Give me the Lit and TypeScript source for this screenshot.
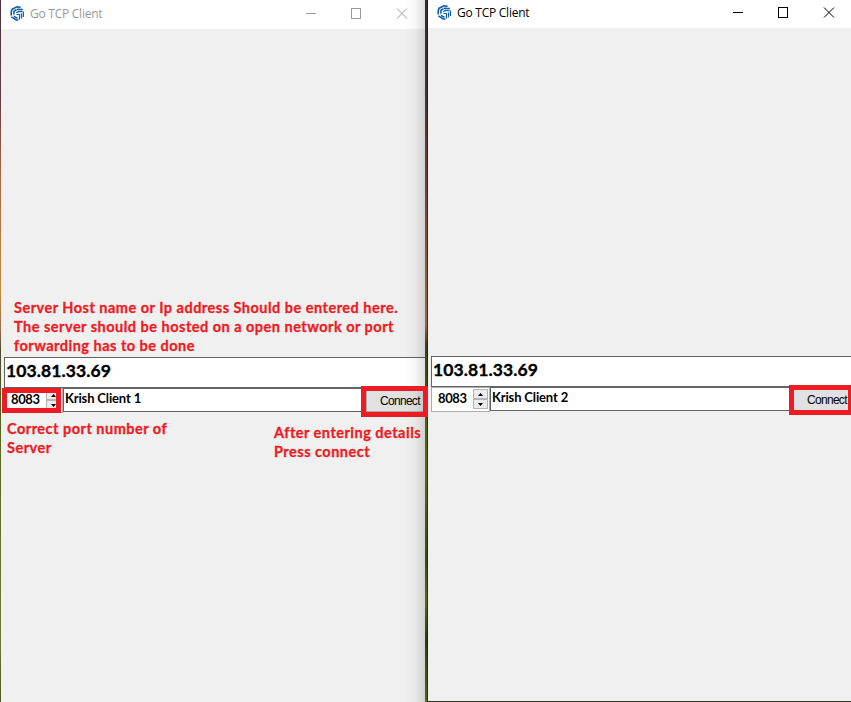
import { LitElement, html, css, svg } from "lit";
import { customElement, property } from "lit/decorators.js";

const logo = svg`
  <g fill="none" stroke="#0f60a8" stroke-width="1.6">
    <path d="M10.6 1.2 L7 0.9 L2.2 3.2 L1.2 5.6 V9.4" />
    <path d="M12.8 3.6 L7.6 3.2 L4 5.2 L3.8 9.2" stroke-dasharray="6 .5" />
    <path d="M12.6 5.8 L8.6 5.4 L6.2 6.8" stroke-width="1.1" />
    <path d="M1.4 10.8 L6.2 14 H8.4 M4 10.4 L7.6 12.4" />
    <path d="M6.5 8.5 H9.5 V13.4 M11.5 7.5 V12.6 M13.4 5.6 V11" stroke-width="1.2" />
  </g>`;

@customElement("client-window")
export class ClientWindow extends LitElement {
  @property() host = "";
  @property() port = "";
  @property() name = "";

  static styles = css`
    :host {
      display: flex;
      flex-direction: column;
      background: #f0f0f0;
      overflow: hidden;
      color: #000;
      --bar: 28px;
      --ink: #000;
      --end: 16px;
      --lift: -4px;
    }
    .bar {
      flex: none;
      display: flex;
      align-items: center;
      height: var(--bar);
      background: #fff;
      color: var(--ink);
      padding-left: 9px;
    }
    .logo { width: 14px; height: 15px; flex: none; margin-top: -3px; }
    .title {
      flex: 1;
      margin-left: 6px;
      margin-top: -2px;
      font: 12px/16px "Open Sans", "Noto Sans", sans-serif;
      letter-spacing: -0.25px;
      white-space: pre;
    }
    .controls { flex: none; width: 103px; height: 11px; margin: var(--lift) var(--end) 0 0; display: block; }
    .form {
      margin: 328px 0 0 3px;
      display: grid;
      grid-template-columns: 59px 303px 1fr;
      grid-template-rows: 31px 25px;
      font-family: Lato, sans-serif;
      font-weight: 700;
    }
    .host {
      grid-column: 1 / -1;
      border: 1px solid #646464;
      border-right: 0;
      background: #fff;
      padding-left: 1px;
      font-size: 17.5px;
      line-height: 26px;
      letter-spacing: 0.1px;
      -webkit-text-stroke: 0.35px;
    }
    .port {
      box-sizing: border-box;
      height: 25px;
      border: 1px solid #abadb3;
      background: #fff;
      display: flex;
      padding: 1px 1px 2px 6px;
      font-size: 13px;
      line-height: 18px;
      letter-spacing: -0.4px;
    }
    .port span { flex: 1; }
    .spin { width: 15px; height: 20px; display: grid; grid-template-rows: 10px 10px; }
    .spin i {
      background: #ececec;
      box-shadow: inset 0 0 0 1px #b4b4b4;
      display: grid;
      place-items: center;
    }
    .spin svg { width: 5px; height: 3px; display: block; }
    .name {
      box-sizing: border-box;
      height: 24px;
      border: 1px solid #646464;
      background: #fff;
      padding-left: 1px;
      font-size: 13px;
      line-height: 18px;
      letter-spacing: -0.15px;
    }
    .connect {
      box-sizing: border-box;
      height: 24px;
      border: 1px solid #adadad;
      border-right: 0;
      background: #e1e1e1;
      padding-left: 13px;
      font: 12px/24px "Liberation Sans", sans-serif;
      letter-spacing: -0.7px;
    }
  `;

  render() {
    return html`
      <div class="bar">
        <svg class="logo" viewBox="0 0 14 15">${logo}</svg>
        <div class="title">Go TCP Client</div>
        <svg class="controls" viewBox="0 0 103 11" fill="none" stroke="currentColor">
          <path d="M1 5.5 H11 M46.5 .5 H55.5 V10.5 H46.5 Z" shape-rendering="crispEdges" />
          <path d="M92 .5 L102 10.5 M102 .5 L92 10.5" />
        </svg>
      </div>
      <div class="form">
        <div class="host">${this.host}</div>
        <div class="port">
          <span>${this.port}</span>
          <div class="spin">
            <i><svg viewBox="0 0 5 3"><path d="M0 3 L2.5 0 L5 3Z" /></svg></i>
            <i><svg viewBox="0 0 5 3"><path d="M0 0 L2.5 3 L5 0Z" /></svg></i>
          </div>
        </div>
        <div class="name">${this.name}</div>
        <div class="connect">Connect</div>
      </div>
    `;
  }
}

@customElement("app-root")
export class AppRoot extends LitElement {
  static styles = css`
    :host {
      display: block;
      position: relative;
      width: 851px;
      height: 702px;
      overflow: hidden;
      background: linear-gradient(#48323f 0, #5d3943 90px, #a86a42 180px, #c08a3e 290px, #a06a50 330px, #4b4a2c 350px, #5b6a1e 450px, #6c7b34 640px, #4c5726 702px);
    }
    .desk { display: grid; grid-template-columns: 424px 423px; column-gap: 3px; margin-left: 1px; height: 702px; }
    client-window.back { --bar: 29px; --ink: #999; --end: 17px; --lift: -3px; position: relative; }
    client-window.back::after {
      content: "";
      position: absolute;
      inset: 0 0 0 auto;
      width: 20px;
      background: linear-gradient(90deg, transparent, rgba(0, 0, 0, 0.03) 50%, rgba(0, 0, 0, 0.13));
    }
    client-window.front { height: 701px; }
    .gap {
      position: absolute;
      left: 425px;
      top: 0;
      width: 3px;
      height: 702px;
      background:
        linear-gradient(90deg, transparent 2px, rgba(20, 18, 22, 0.65) 2px),
        linear-gradient(#3c2833 0, #46303a 90px, #6e4136 180px, #9a5c38 290px, #a06045 325px, #3c3f1c 345px, #4d5a12 400px, #5a6d0c 470px, #3a4a12 560px, #5a6d10 600px, #2d3c10 640px, #56690f 702px);
    }
    .base { position: absolute; left: 428px; right: 0; bottom: 0; height: 1px; background: #30371f; }
    .mark { position: absolute; box-sizing: border-box; border: 5px solid #ed1c24; }
    .mark.port { left: 2px; top: 388px; width: 59px; height: 25px; }
    .mark.left { left: 361px; top: 386px; width: 67px; height: 31px; }
    .mark.right { left: 789px; top: 385px; width: 64px; height: 30px; }
    .note {
      position: absolute;
      color: #ed1c24;
      font: 700 14.5px/19px Lato, sans-serif;
      letter-spacing: 0.49px;
      -webkit-text-stroke: 0.3px;
      white-space: pre;
    }
    .note.host { left: 14px; top: 298px; }
    .note.num { left: 7px; top: 419px; }
    .note.press { left: 274px; top: 423px; }
  `;

  render() {
    return html`
      <div class="desk">
        <client-window class="back" host="103.81.33.69" port="8083" name="Krish Client 1"></client-window>
        <client-window class="front" host="103.81.33.69" port="8083" name="Krish Client 2"></client-window>
      </div>
      <div class="gap"></div>
      <div class="base"></div>
      <div class="mark port"></div>
      <div class="mark left"></div>
      <div class="mark right"></div>
      <div class="note host">Server Host name or Ip address Should be entered here.
The server should be hosted on a open network or port
forwarding has to be done</div>
      <div class="note num">Correct port number of
Server</div>
      <div class="note press">After entering details
Press connect</div>
    `;
  }
}
